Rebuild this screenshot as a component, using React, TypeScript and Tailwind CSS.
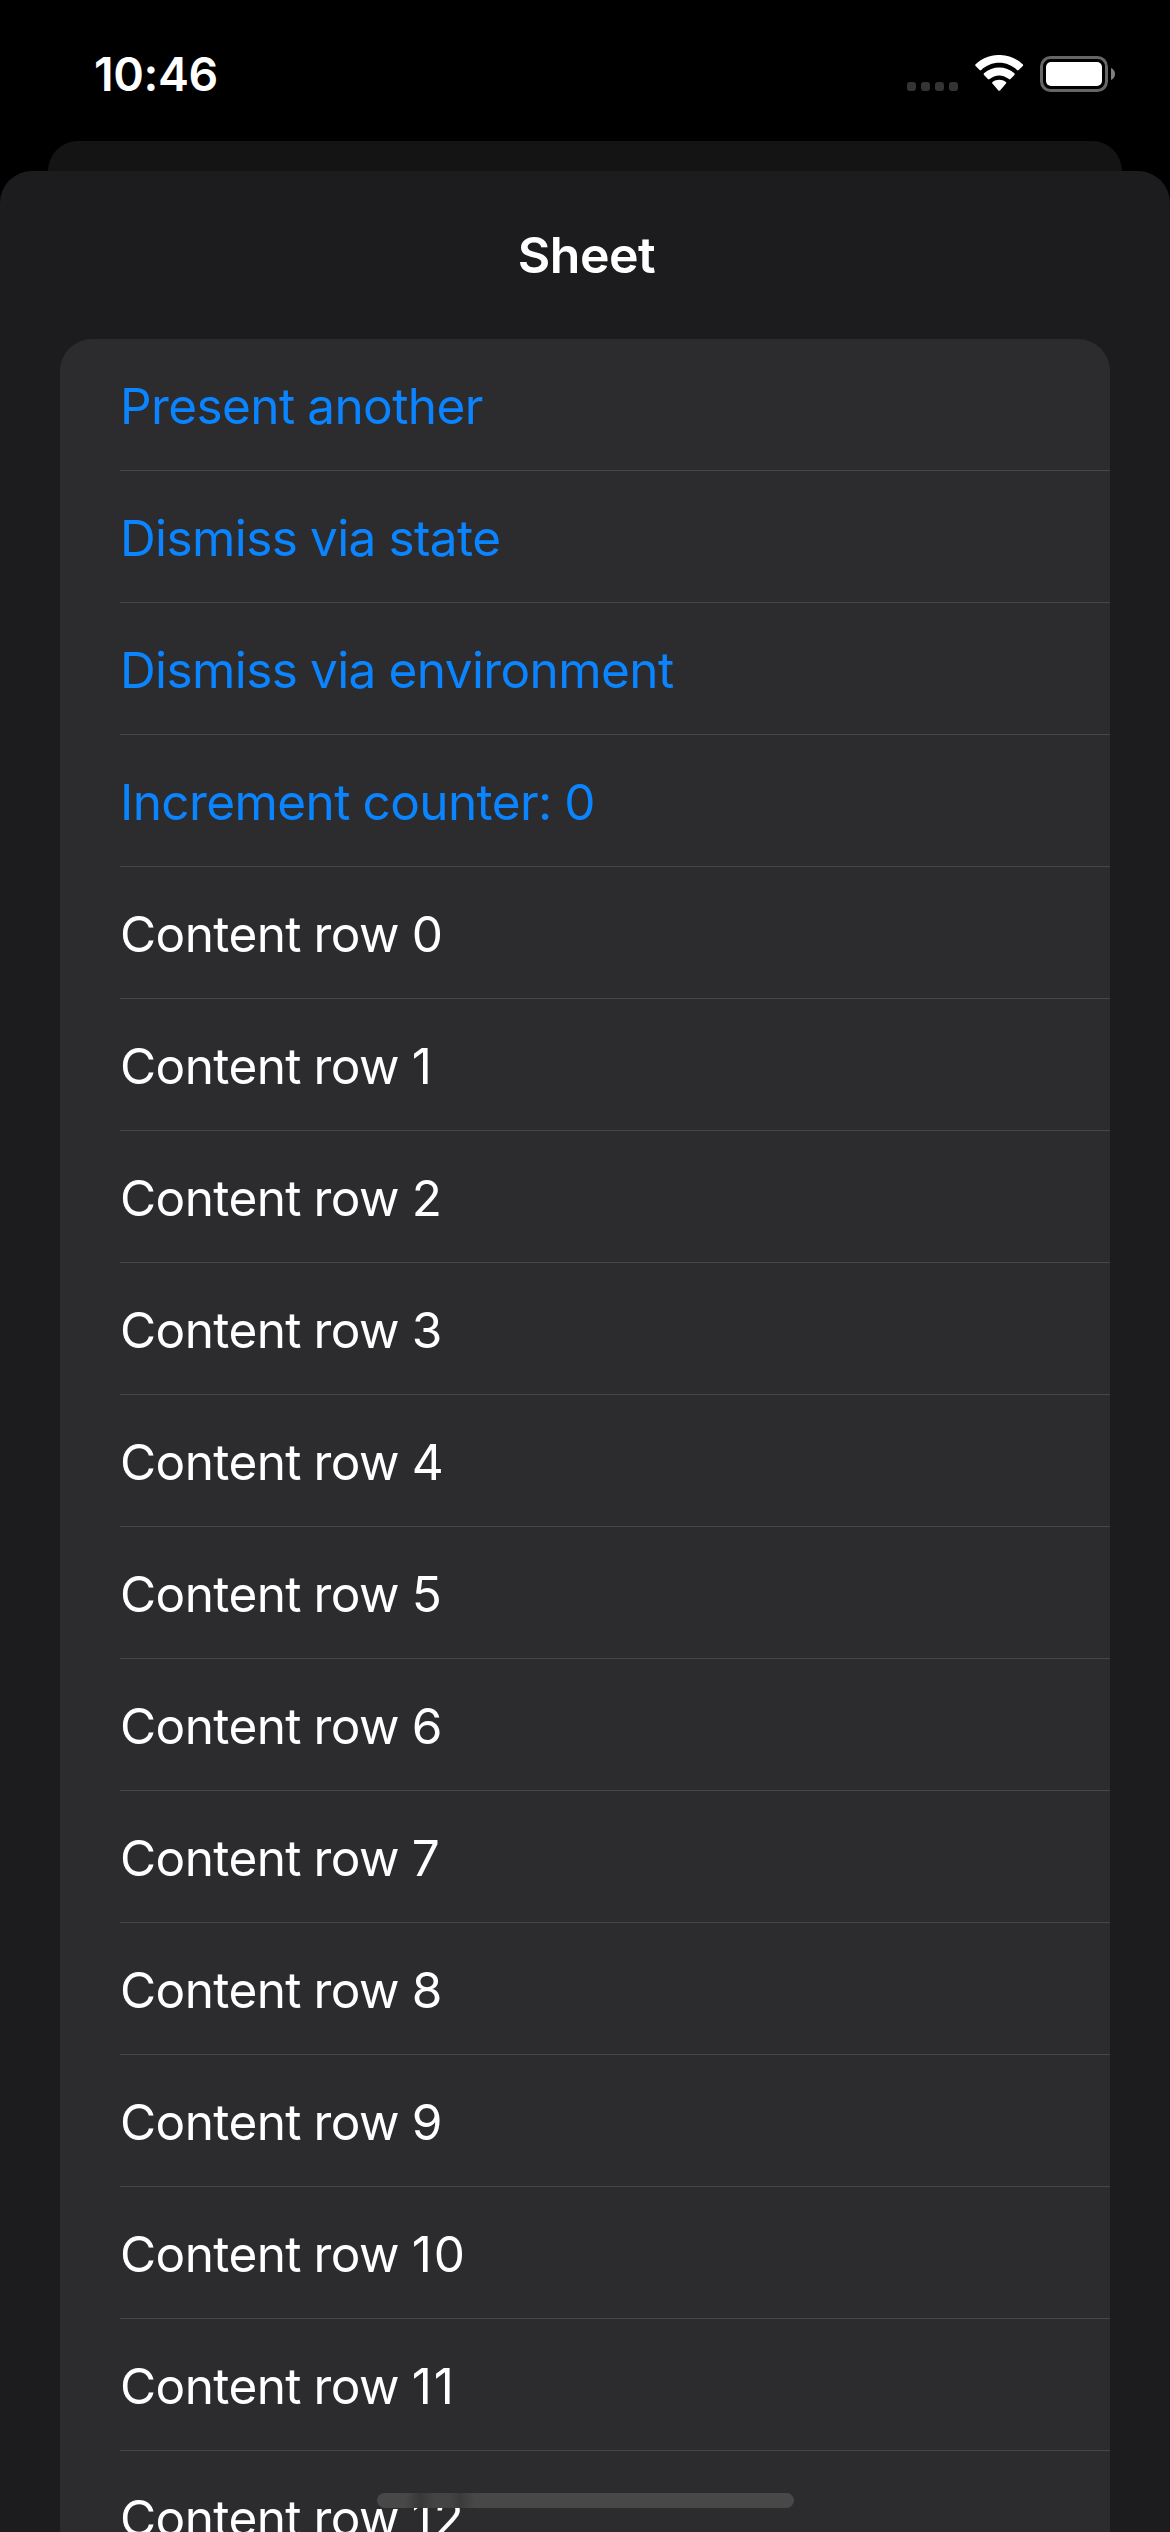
const actions = ["Present another", "Dismiss via state", "Dismiss via environment", "Increment counter: 0"];
const rowNumbers = Array.from({ length: 13 }, (_, i) => i);

const rowClass =
  "h-[132px] border-b border-[#464649] pt-[36.5px] text-[49.5px] leading-[60px] tracking-[-0.6px] whitespace-nowrap [word-spacing:-0.6px]";

function StatusBar() {
  return (
    <div className="flex h-[141px] shrink-0 items-start justify-between pr-[55px] pl-[94px]">
      <span className="mt-[46px] text-[46.5px] leading-[56px] font-semibold tracking-[-0.4px]">10:46</span>
      <div className="mt-[55px] flex items-start">
        <svg width="51" height="38" viewBox="0 0 51 38" fill="#343434">
          {[0, 14, 28, 42].map((x) => (
            <rect key={x} x={x} y="27" width="9" height="9" rx="3" />
          ))}
        </svg>
        <svg className="ml-[17px]" width="49" height="38" viewBox="0 0 49 38" fill="white">
          <path d="M24.2 7.8C31 7.8 37.2 10.4 42 15Q42.9 15.8 43.7 15L47.8 10.9Q48.5 10 47.7 9.2C34.5-3.1 13.9-3.1.6 9.2Q-.2 10 .6 10.9L4.6 15Q5.4 15.8 6.3 15C11.1 10.4 17.4 7.8 24.2 7.8Z" />
          <path d="M24.2 20.4C27.8 20.4 31.2 21.8 33.9 24.1Q34.7 24.8 35.5 24L39.4 20Q40.2 19.1 39.4 18.3C30.8 10.4 17.6 10.4 9 18.3Q8.2 19.1 9 20L12.9 24Q13.7 24.8 14.6 24.1C17.2 21.8 20.6 20.4 24.2 20.4Z" />
          <path d="M31 28.5Q31.8 27.7 30.9 27C27 23.9 21.4 23.9 17.5 27Q16.6 27.7 17.4 28.5L23.4 35.4Q24.2 36.2 25 35.4Z" />
        </svg>
        <svg className="ml-[16px]" width="75" height="38" viewBox="0 0 75 38">
          <rect x="1.5" y="2.5" width="65" height="33" rx="9" fill="none" stroke="#666" strokeWidth="3" />
          <rect x="6" y="7" width="56" height="24" rx="5" fill="white" />
          <path d="M71 13v12q4-1.8 4-6t-4-6" fill="#808080" />
        </svg>
      </div>
    </div>
  );
}

export default function App() {
  return (
    <div className="relative flex h-[2532px] w-[1170px] flex-col overflow-hidden bg-black font-[Inter,sans-serif] text-white">
      <StatusBar />
      <div className="mx-[48px] h-[30px] shrink-0 rounded-t-[30px] bg-[#141414]" />
      <main className="flex-1 overflow-hidden rounded-t-[32px] bg-[#1c1c1e] px-[60px]">
        <h1 className="flex h-[168px] items-center justify-center pl-[3px] text-[50px] leading-[60px] font-semibold tracking-[-0.5px]">Sheet</h1>
        <div className="rounded-t-[32px] bg-[#2c2c2e] pl-[60px]">
          {actions.map((label) => (
            <div key={label} className={`${rowClass} text-[#0a84ff]`}>{label}</div>
          ))}
          {rowNumbers.map((n) => (
            <div key={n} className={rowClass}>
              Content row <span className="tracking-[2px]">{n}</span>
            </div>
          ))}
        </div>
      </main>
      <div className="absolute top-[2493px] left-[377px] h-[15px] w-[417px] rounded-full bg-[#484848] bg-[linear-gradient(90deg,transparent_28px,#383838_43px,#444_58px,#444_72px,#3b3b3b_83px,#484848_98px)]" />
    </div>
  );
}
